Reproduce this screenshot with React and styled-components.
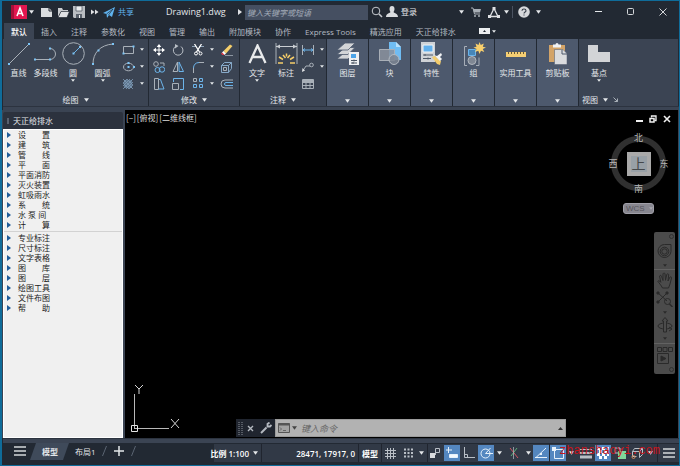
import styled, { createGlobalStyle } from "styled-components";

const GlobalStyle = createGlobalStyle`
  * {
    box-sizing: border-box;
  }

  body {
    margin: 0;
    background-color: #222933;
    font-family: "Open Sans", "Noto Sans CJK SC", sans-serif;
    font-size: 8px;
    color: #e4e7ea;
  }

  button,
  input {
    font-family: inherit;
    font-size: inherit;
    color: inherit;
  }

  button {
    margin: 0;
    padding: 0;
    border: none;
    background: none;
  }
`;

const Window = styled.div`
  display: flex;
  flex-direction: column;
  min-height: 100vh;
  background-color: #222933;
  border: 1px solid #0f6c9a;
  border-left-width: 2px;
`;

const Svg = styled.svg`
  display: block;
  flex: none;
  fill: none;
  stroke: #a9b0b8;
  stroke-width: 1;
`;

/* ---------- title bar ---------- */

const TitleBar = styled.header`
  display: flex;
  align-items: center;
  height: 22px;
  padding-left: 8px;
`;

const FileTools = styled.div`
  display: flex;
  align-items: center;
  margin-left: 4px;
`;

const IconButton = styled.button`
  display: flex;
  align-items: center;
  justify-content: ${(props) => (props.$end ? "flex-end" : "center")};
  flex: none;
  width: ${(props) => props.$w || 16}px;
  height: ${(props) => props.$h || 16}px;
`;

const TextButton = styled.button`
  display: flex;
  align-items: center;
  flex: none;
  gap: 3px;
  line-height: 12px;
  white-space: nowrap;
  color: ${(props) => props.$color || "#e4e7ea"};
`;

const FileName = styled.h1`
  margin: 0 0 0 32px;
  width: 69px;
  flex: none;
  font-size: 9px;
  font-weight: 400;
  line-height: 14px;
`;

const SearchBox = styled.input`
  flex: none;
  width: 123px;
  height: 15px;
  padding: 0 2px;
  border: none;
  border-radius: 0;
  background-color: #454f61;
  outline: none;

  &::placeholder {
    color: #a3abb7;
    font-style: italic;
    opacity: 1;
  }
`;

const Spacer = styled.div`
  flex: 1;
`;

const Divider = styled.span`
  flex: none;
  width: 1px;
  height: ${(props) => props.$h || 12}px;
  background-color: ${(props) => props.$color || "#4a5260"};
`;

/* ---------- ribbon ---------- */

const TabBar = styled.nav`
  display: flex;
  align-items: stretch;
  height: 16px;
  padding-left: 2px;
`;

const RibbonTab = styled.button`
  padding: 0 7px;
  line-height: 15px;
  white-space: nowrap;
  font-weight: ${(props) => (props.$active ? 500 : 400)};
  color: ${(props) => (props.$active ? "#ffffff" : "#b4bac2")};
  background-color: ${(props) => (props.$active ? "#3b4453" : "transparent")};
`;

const Ribbon = styled.section`
  display: flex;
  gap: 1px;
  height: 67px;
  padding: 0 1px;
`;

const Panel = styled.div`
  display: flex;
  flex-direction: column;
  flex: ${(props) => (props.$w ? "none" : "1")};
  width: ${(props) => (props.$w ? `${props.$w}px` : "auto")};
  background-color: #3b4453;
`;

const PanelBody = styled.div`
  display: flex;
  flex: 1;
  padding: 2px 0 0 ${(props) => props.$pad || 0}px;
`;

const PanelFooter = styled.button`
  display: flex;
  align-items: center;
  justify-content: ${(props) => (props.$start ? "flex-start" : "center")};
  gap: 5px;
  height: 13px;
  padding: 0 3px;
  line-height: 12px;
`;

const BigTool = styled.button`
  display: flex;
  flex-direction: column;
  align-items: center;
  width: ${(props) => props.$w}px;
  height: 46px;
  line-height: 12px;
  white-space: nowrap;
`;

const BigIcon = styled.span`
  display: flex;
  align-items: center;
  height: 25px;
  margin-bottom: 1px;
`;

const ToolGrid = styled.div`
  display: grid;
  grid-template-columns: ${(props) => props.$cols};
  grid-auto-rows: 17px;
`;

const ToolCell = styled.div`
  display: flex;
  align-items: center;
`;

const CollapsedPanel = styled.button`
  display: flex;
  flex-direction: column;
  align-items: center;
  flex: none;
  width: 41px;
  padding: 2px 0 3px;
  line-height: 12px;
  white-space: nowrap;
  background-color: #4d596d;
`;

const Strip = styled.div`
  flex: none;
  height: ${(props) => props.$h}px;
  margin-left: 1px;
  background-color: #3b4453;
  border-top: 1px solid #2c333f;
`;

/* ---------- work area ---------- */

const Workspace = styled.main`
  display: flex;
  flex: 1;
  padding: 0 1px;
  background-color: #3b4453;
`;

const Palette = styled.aside`
  display: flex;
  flex-direction: column;
  flex: none;
  width: 120px;
  margin: 2px 2px 0 0;
`;

const PaletteTitle = styled.h2`
  display: flex;
  align-items: center;
  gap: 4px;
  height: 17px;
  margin: 0;
  padding-left: 4px;
  border-radius: 2px 2px 0 0;
  font-size: 8px;
  font-weight: 400;
  background-color: #2c323e;
`;

const Grip = styled.span`
  width: 2px;
  height: 6px;
  background-color: #596170;
`;

const PaletteBody = styled.div`
  flex: 1;
  background-color: #f0f0f0;
  border: 1px solid #ffffff;
`;

const PaletteGroup = styled.ul`
  list-style: none;
  margin: 0;
  padding: 0;

  & + & {
    margin-top: 1px;
    padding-top: 1px;
    border-top: 1px solid #d2d2d2;
  }
`;

const PaletteItem = styled.button`
  display: flex;
  align-items: center;
  gap: 7px;
  width: 100%;
  height: 10px;
  padding-left: 3px;
  line-height: 10px;
  white-space: pre;
  color: #1b1b1b;
`;

const Canvas = styled.section`
  position: relative;
  flex: 1;
  min-height: 328px;
  background-color: #000000;
`;

const ViewLabels = styled.div`
  display: flex;
  gap: 1px;
  padding: 2px 1px;
  font-family: "Noto Sans CJK SC", sans-serif;
  line-height: 13px;
  color: #dcdcdc;
`;

const DocControls = styled.div`
  position: absolute;
  top: 2px;
  right: 4px;
  display: flex;
`;

const ViewCube = styled.div`
  position: absolute;
  top: 21px;
  right: 7px;
  display: flex;
  flex-direction: column;
  align-items: center;
`;

const CubeGrid = styled.div`
  display: grid;
  grid-template-columns: 14px 37px 14px;
  grid-template-rows: 14px 37px 14px;
  place-items: center;
  background: radial-gradient(
    circle at center,
    transparent 21px,
    #303030 22px,
    #303030 27px,
    transparent 28px
  );
`;

const Compass = styled.button`
  grid-area: ${(props) => props.$area};
  line-height: 12px;
  font-size: 9px;
  color: #b5b5b5;
`;

const CubeFace = styled.button`
  grid-area: 2 / 2;
  width: 24px;
  height: 24px;
  border: 4px solid #a9a9a9;
  font-size: 14px;
  line-height: 15px;
  color: #45484b;
  background-color: #98a0a6;
`;

const WcsButton = styled.button`
  display: flex;
  align-items: center;
  gap: 4px;
  width: 31px;
  height: 11px;
  margin-top: 7px;
  padding-left: 2px;
  border: 1px solid #a09fa8;
  border-radius: 3px;
  font-family: "Liberation Sans", sans-serif;
  color: #55545c;
  background-color: #87868f;
`;

const NavBar = styled.div`
  position: absolute;
  top: 122px;
  right: 3px;
  display: flex;
  flex-direction: column;
  align-items: center;
  width: 21px;
  padding: 1px 0;
  border-radius: 2px;
  background-color: #4b4b4b;

  svg {
    stroke: #2a2a2a;
  }
`;

const NavEnd = styled.span`
  align-self: flex-end;
  width: 5px;
  height: 5px;
  margin: 1px 1px;
  border: 1px solid #303030;
  border-radius: 50%;
`;

const NavRule = styled.span`
  width: 100%;
  height: 1px;
  background-color: #626262;
`;

const Ucs = styled.div`
  position: absolute;
  left: 5px;
  bottom: 3px;
`;

const CommandLine = styled.form`
  position: absolute;
  left: 111px;
  right: 112px;
  bottom: 1px;
  display: flex;
  align-items: center;
  height: 18px;
  padding-left: 2px;
  background-color: #20252f;
`;

const CommandField = styled.div`
  display: flex;
  align-items: center;
  flex: 1;
  height: 18px;
  padding: 0 2px;
  border: 1px solid #9b9b9b;
  background-color: #b2b2b2;
`;

const CommandInput = styled.input`
  flex: 1;
  min-width: 0;
  height: 14px;
  padding: 0 3px;
  border: none;
  outline: none;
  font-size: 9px;
  background: transparent;
  color: #222222;

  &::placeholder {
    color: #666666;
    font-style: italic;
    opacity: 1;
  }
`;

/* ---------- status bar ---------- */

const StatusBar = styled.footer`
  position: relative;
  display: flex;
  align-items: flex-start;
  flex: none;
  height: 22px;
  padding-left: 8px;
`;

const LayoutTab = styled.button`
  height: 17px;
  padding: ${(props) => (props.$active ? "0 11px 0 12px" : "0 6px")};
  line-height: 16px;
  white-space: nowrap;
  font-weight: ${(props) => (props.$active ? 700 : 400)};
  background-color: ${(props) => (props.$active ? "#3f4a5a" : "transparent")};
  clip-path: ${(props) =>
    props.$active
      ? "polygon(6px 0, 100% 0, calc(100% - 6px) 100%, 0 100%)"
      : "none"};
`;

const StatusTools = styled.div`
  display: flex;
  align-items: stretch;
  height: 18px;
  margin-top: 1px;
  background-color: #313946;
`;

const StatusText = styled.button`
  display: flex;
  align-items: center;
  justify-content: flex-end;
  gap: 4px;
  width: ${(props) => props.$w}px;
  padding-right: 3px;
  border-right: 1px solid #20252f;
  white-space: nowrap;
  font-weight: ${(props) => props.$weight || 600};
  color: #ffffff;
`;

const StatusButton = styled.button`
  display: flex;
  align-items: center;
  justify-content: center;
  width: ${(props) => props.$w || 17}px;
  margin: 1px 0;
  background-color: ${(props) => (props.$active ? "#5487c0" : "transparent")};

  svg {
    stroke: ${(props) => (props.$active ? "#e6f1fb" : "#b9bfc6")};
  }
`;

const Watermark = styled.span`
  position: absolute;
  right: 19px;
  top: 1px;
  font-family: "Liberation Mono", monospace;
  font-size: 12px;
  line-height: 14px;
  color: #c8141c;
  pointer-events: none;
`;

/* ---------- drawings ---------- */

const Icon = ({ w, h = w, children, ...rest }) => (
  <Svg width={w} height={h} viewBox={`0 0 ${w} ${h}`} aria-hidden="true" {...rest}>
    {children}
  </Svg>
);

const Caret = ({ color = "#e4e7ea", size = 4 }) => (
  <Svg width={size} height={size === 4 ? 3 : 4} viewBox="0 0 6 4" aria-hidden="true">
    <path d="M0 0h6L3 4z" fill={color} stroke="none" />
  </Svg>
);

const BLUE = "#6cb4ea";

const Dot = ({ x, y }) => (
  <rect x={x - 1} y={y - 1} width="2" height="2" fill="#7cc4f5" stroke="none" />
);

const icons = {
  logo: (
    <Icon w={16} h={14}>
      <path d="M0 0h16v14H0z" fill="#e3164f" stroke="none" />
      <path d="M0 0h3v14H0z" fill="#a80f38" stroke="none" />
      <path d="M6 11l3-8 3 8M7 8.5h4" stroke="#fff" strokeWidth="1.6" />
    </Icon>
  ),
  newFile: (
    <Icon w={12} h={10}>
      <path d="M0 1h8l3 3v6H0z" fill="#d9dcdf" stroke="none" />
      <path d="M8 0v4h4" stroke="#222933" />
    </Icon>
  ),
  open: (
    <Icon w={13} h={11}>
      <path d="M1 10V1h4l1 2h5v2H4z" fill="#c9ccd0" stroke="none" />
      <path d="M1 10.500L4 4.500h8.500l-2.500 6z" fill="#dfe1e4" stroke="#222933" strokeWidth=".7" />
    </Icon>
  ),
  save: (
    <Icon w={12}>
      <path d="M0 0h12v12H1L0 11z" fill="#b9bdc2" stroke="none" />
      <path d="M3 0h6v5H3z" fill="#eceef0" stroke="#555d68" strokeWidth=".8" />
      <path d="M3 8h6v4H3z" fill="#59616c" stroke="none" />
      <path d="M6.500 9v3" stroke="#eceef0" />
    </Icon>
  ),
  more: (
    <Icon w={8} h={6}>
      <path d="M0 .500L3.500 3 0 5.500zM4 .500L7.500 3 4 5.500z" fill="#dfe1e4" stroke="none" />
    </Icon>
  ),
  plane: (
    <Icon w={12} h={11}>
      <path d="M0 6L12 0 9 10 6 8 4 11 3.500 7z" fill="#5fb2ee" stroke="none" />
      <path d="M3.500 7L10 2 5.500 8" stroke="#222933" strokeWidth=".7" />
    </Icon>
  ),
  play: (
    <Icon w={4} h={6}>
      <path d="M0 0l4 3-4 3z" fill="#dfe1e4" stroke="none" />
    </Icon>
  ),
  search: (
    <Icon w={12}>
      <circle cx="5" cy="5" r="3.800" stroke="#c5c9ce" />
      <path d="M8 8l3 3" stroke="#c5c9ce" strokeWidth="1.600" />
    </Icon>
  ),
  user: (
    <Icon w={12}>
      <path d="M3.500 3a2.500 3 0 015 0c0 1.500-.6 2.300-1 3 0 1 4.500 1.200 4.500 5H0c0-3.800 4.500-4 4.500-5-.4-.7-1-1.500-1-3z" fill="#d9dcdf" stroke="none" />
    </Icon>
  ),
  cart: (
    <Icon w={10}>
      <path d="M0 1h2l1.500 6H9" stroke="#a9afb6" />
      <path d="M2 2h8L9 5.500H3z" fill="#a9afb6" stroke="none" />
      <circle cx="4" cy="9" r="1" fill="#a9afb6" stroke="none" />
      <circle cx="8" cy="9" r="1" fill="#a9afb6" stroke="none" />
    </Icon>
  ),
  autodesk: (
    <Icon w={12} h={11}>
      <path d="M6 1.500L10 9.500H2z" stroke="#dfe1e4" strokeWidth="1.300" />
      <path d="M4.500 0h3v3h-3zM0 8h3v3H0zM9 8h3v3H9z" fill="#dfe1e4" stroke="none" />
    </Icon>
  ),
  help: (
    <Icon w={12}>
      <circle cx="6" cy="6" r="5.800" fill="#d6d8db" stroke="none" />
      <path d="M4 4.700C4 2.500 8 2.500 8 4.700 8 6 6 6 6 7.600M6 8.600v1" stroke="#333b47" strokeWidth="1.100" />
    </Icon>
  ),
  minimize: (
    <Icon w={8}>
      <path d="M0 3.500h7" stroke="#e4e7ea" />
    </Icon>
  ),
  maximize: (
    <Icon w={8}>
      <rect x=".500" y=".500" width="6" height="6" rx="1" stroke="#d4d7da" />
    </Icon>
  ),
  close: (
    <Icon w={8}>
      <path d="M.500 .500l7 7M7.500 .500l-7 7" stroke="#d4d7da" />
    </Icon>
  ),
  line: (
    <Icon w={22}>
      <path d="M1 21L21 1" />
      <Dot x={1} y={21} />
      <Dot x={21} y={1} />
    </Icon>
  ),
  polyline: (
    <Icon w={24} h={16}>
      <path d="M1 13.500h15a5.500 5.500 0 000-11" />
      <Dot x={1} y={13.5} />
      <Dot x={16} y={13.5} />
      <Dot x={16} y={2.5} />
    </Icon>
  ),
  circle: (
    <Icon w={23}>
      <circle cx="11.500" cy="11.500" r="10.800" />
      <path d="M11.500 11.500l6-6" stroke={BLUE} />
      <Dot x={11.5} y={11.5} />
      <Dot x={18} y={5} />
    </Icon>
  ),
  arc: (
    <Icon w={22}>
      <path d="M1 21C1 10 8 2 21 1" />
      <Dot x={1} y={21} />
      <Dot x={6.5} y={7.5} />
      <Dot x={21} y={1} />
    </Icon>
  ),
  rect: (
    <Icon w={13} h={10}>
      <path d="M1.500 1.500h10v7h-10z" />
      <Dot x={11.5} y={1.5} />
      <Dot x={1.5} y={8.5} />
    </Icon>
  ),
  ellipse: (
    <Icon w={13} h={10}>
      <ellipse cx="6.500" cy="5" rx="5" ry="3.800" />
      <Dot x={6.5} y={5} />
      <Dot x={12} y={5} />
      <Dot x={6.5} y={1} />
    </Icon>
  ),
  hatch: (
    <Icon w={12}>
      <path d="M2 2h8v8H2z" fill="#5f7790" stroke="none" />
      <path d="M1 5l4-4M1 8l7-7M1 11L11 1M4 11l7-7M7 11l4-4M1 1l10 10M5 1l6 6M1 5l6 6" stroke="#7f9ab5" strokeWidth=".800" />
    </Icon>
  ),
  move: (
    <Icon w={12}>
      <path d="M6 1v10M1 6h10" stroke="#fff" />
      <path d="M6 0l2.300 3H3.700zM6 12l2.300-3H3.700zM0 6l3-2.300v4.600zM12 6L9 3.700v4.600z" fill="#fff" stroke="none" />
    </Icon>
  ),
  rotate: (
    <Icon w={12}>
      <path d="M9 2.500a4.800 4.800 0 11-5-.4" stroke="#b9bfc6" />
      <path d="M3 0l3.500 2L3 4.500z" fill="#b9bfc6" stroke="none" />
    </Icon>
  ),
  trim: (
    <Icon w={12}>
      <path d="M0 2.500h4M7 2.500h5" stroke="#8fa3b8" />
      <path d="M2.500 0l5 8M9.500 0l-5 8" stroke="#fff" strokeWidth="1.300" />
      <circle cx="4" cy="9.500" r="1.500" stroke="#fff" />
      <circle cx="8.500" cy="9.500" r="1.500" stroke="#fff" />
    </Icon>
  ),
  erase: (
    <Icon w={13} h={12}>
      <path d="M3.500 7L10 .500 12.500 2 6 9.500z" fill="#f5cf6b" stroke="none" />
      <path d="M3.500 7L6 9.500 4.500 11 2 8.500z" fill="#fff" stroke="none" />
      <path d="M2 8.500L4.500 11H2.500L1 9.700z" fill="#e8394a" stroke="none" />
      <path d="M5 11.500h8" stroke="#8c95a1" />
    </Icon>
  ),
  copy: (
    <Icon w={12}>
      <circle cx="3" cy="3" r="2.300" />
      <path d="M7 2h4v3" />
      <circle cx="4.500" cy="9" r="2.500" stroke={BLUE} />
      <circle cx="9" cy="8.500" r="2.700" stroke={BLUE} />
    </Icon>
  ),
  mirror: (
    <Icon w={12}>
      <path d="M5.500 1v9.500H1z" />
      <path d="M7 1v9.500h4.500z" stroke={BLUE} />
    </Icon>
  ),
  fillet: (
    <Icon w={12}>
      <path d="M1.500 12V7" />
      <path d="M1.500 7c0-3 2-5.500 5.500-5.500" stroke={BLUE} />
      <path d="M7 1.500h5" />
    </Icon>
  ),
  box: (
    <Icon w={12}>
      <path d="M1.500 4.500h7v7h-7zM1.500 4.500l3-3h7l-3 3M11.500 1.500v6l-3 4" stroke="#86a9c8" />
      <path d="M3.500 6.500h3v3h-3z" />
    </Icon>
  ),
  stretch: (
    <Icon w={12}>
      <path d="M1.500 .500h4v11h-4z" />
      <path d="M5.500 1.500h2l3.500 9.500H5.500" stroke={BLUE} />
    </Icon>
  ),
  scale: (
    <Icon w={12}>
      <path d="M1.500 4V.500h10v11H8" stroke={BLUE} />
      <path d="M.500 5.500h6v6h-6z" />
    </Icon>
  ),
  array: (
    <Icon w={12} h={11}>
      <path d="M1.500 .500h3v3h-3z" stroke="#a9b0b8" />
      <path d="M7.500 .500h3v3h-3zM1.500 6.500h3v3h-3zM7.500 6.500h3v3h-3z" stroke={BLUE} />
    </Icon>
  ),
  offset: (
    <Icon w={13} h={10}>
      <path d="M13 1H5a4 4 0 000 8h8" />
      <path d="M13 3.500H6a1.500 1.500 0 000 3h7" stroke={BLUE} />
    </Icon>
  ),
  text: (
    <Icon w={19} h={20}>
      <path d="M1.500 19L9.500 1.500 17.500 19M4.500 13h10" stroke="#e8eaec" strokeWidth="2.300" />
    </Icon>
  ),
  dimension: (
    <Icon w={23}>
      <path d="M1 1v21M22 1v21" />
      <path d="M1 4.500h21" stroke="#c9cdd2" />
      <path d="M1 4.500l4-2v4zM22 4.500l-4-2v4z" fill="#c9cdd2" stroke="none" />
      <path d="M8 13l2.500 3M15 13l-2.500 3M11.500 11.500v3M4 15l4 2.500M19 15l-4 2.500M3 21h5M15 21h5" stroke="#f6cd69" strokeWidth="1.500" />
    </Icon>
  ),
  linearDim: (
    <Icon w={12} h={10}>
      <path d="M.500 0v10M11.500 0v10" />
      <path d="M1 5h10M3 3.500L1 5l2 1.500M9 3.500L11 5 9 6.500" stroke={BLUE} />
    </Icon>
  ),
  leader: (
    <Icon w={12} h={10}>
      <path d="M1 8.500L4 4h4" />
      <circle cx="9.500" cy="3" r="1.800" />
      <path d="M0 10l.500-4L3 8.500z" fill="#dfe1e4" stroke="none" />
    </Icon>
  ),
  table: (
    <Icon w={12} h={10}>
      <path d="M.500 .500h11v9H.500zM.500 3.500h11M.500 6.500h11M4 3.500v6M8 3.500v6" />
      <path d="M1 1h10v2H1z" fill="#a9b0b8" stroke="none" />
    </Icon>
  ),
  layers: (
    <Icon w={24}>
      <g fill="#d2d4d7" stroke="#4d596d" strokeWidth=".800">
        <path d="M1 17l8-7h10l-7 7z" />
        <path d="M1 12.500l8-7h10l-7 7z" />
        <path d="M1 8l8-7h10l-7 7z" />
      </g>
      <path d="M13 10h10v13H13z" fill="#eef0f2" stroke="none" />
      <path d="M15 12h5v4h-5z" fill="#4ba3e8" stroke="none" />
      <path d="M15 18.500h6M15 21h6M18 17.500v2M17 20v2" stroke="#4b5563" />
    </Icon>
  ),
  block: (
    <Icon w={24}>
      <path d="M11 0h7l5 5v13H11z" fill="#6fbcf3" stroke="none" />
      <path d="M18 0l5 5h-5z" fill="#b9e0fb" stroke="none" />
      <path d="M1.500 7.500h15v11h-15z" fill="#8b929d" fillOpacity=".85" stroke="#a9afb7" />
      <circle cx="16" cy="17.500" r="5" fill="#7c8592" fillOpacity=".85" stroke="#b4bac1" />
    </Icon>
  ),
  properties: (
    <Icon w={24}>
      <path d="M1 0h14v20H1z" fill="#cfd2d6" stroke="none" />
      <path d="M3 3h10v7H3z" fill="#62b0ec" stroke="#f1f3f5" />
      <path d="M3 13h10M3 16.500h8M5 12v2M8 15.500v2" stroke="#515b69" />
      <path d="M12 15l3-1 6 5-1 4-3-1z" fill="#f2cc6c" stroke="none" />
      <path d="M14 13l3 1 4-3 1 2-2 2 2 2-2 2z" fill="#f1f3f5" stroke="none" />
    </Icon>
  ),
  group: (
    <Icon w={24}>
      <path d="M5 4.500H2.500v19H5M14 23.500h3v-8" stroke="#a7aeb8" />
      <path d="M6.500 7.500h7v6h-7z" fill="#4786b8" stroke={BLUE} />
      <circle cx="10" cy="18.500" r="4" fill="#7f8793" stroke="#b1b7be" />
      <path d="M17.500 0l1.300 3 3-1.500-1 3.200 3.200.8-3.200 1.500 1.500 3-3.300-1.200-1.500 3.200-1.200-3.200-3.300 1.200 1.500-3L11.500 5.500l3-.8-1-3.200 3 1.500z" fill="#f8cf6d" stroke="none" />
    </Icon>
  ),
  ruler: (
    <Icon w={20} h={24}>
      <path d="M0 10h20v5H0z" fill="#f6cf73" stroke="none" />
      <path d="M2.500 10v2M5.500 10v2M8.500 10v2M11.500 10v2M14.500 10v2M17.500 10v2" stroke="#6a5a36" />
    </Icon>
  ),
  clipboard: (
    <Icon w={22} h={24}>
      <path d="M2 3h16v17H2z" fill="#d3a468" stroke="none" />
      <path d="M6 2.500h2.500a1.500 1.500 0 013 0H14v3H6z" fill="#f1f3f5" stroke="none" />
      <path d="M7.500 7.500h8.500l4 4v11H7.500z" fill="#dadcdf" stroke="#4d596d" strokeWidth=".500" />
      <path d="M15 8v4h5" stroke="#4d596d" />
    </Icon>
  ),
  base: (
    <Icon w={22} h={17}>
      <path d="M0 0h10v7h12v10H0z" fill="#d2d4d7" stroke="none" />
    </Icon>
  ),
  launcher: (
    <Icon w={5}>
      <path d="M.500 .500l4 4M4.500 1.500v3h-3" />
    </Icon>
  ),
  ribbonState: (
    <Icon w={11} h={6}>
      <path d="M0 0h11v6H0z" fill="#eceef0" stroke="none" />
      <path d="M4 4l1.500-2L7 4z" fill="#222933" stroke="none" />
    </Icon>
  ),
  docMin: (
    <Icon w={8}>
      <path d="M1 6h7" stroke="#f0f0f0" strokeWidth="2" />
    </Icon>
  ),
  docRestore: (
    <Icon w={8}>
      <path d="M2.500 2.500V1H7v4.500H5.500" stroke="#f0f0f0" strokeWidth="1.300" />
      <path d="M1 3.500h4V7H1z" stroke="#f0f0f0" strokeWidth="1.500" />
    </Icon>
  ),
  docClose: (
    <Icon w={8}>
      <path d="M1 1l6 6M7 1L1 7" stroke="#f0f0f0" strokeWidth="1.600" />
    </Icon>
  ),
  wheel: (
    <Icon w={15}>
      <path d="M7.500 .500h6.500v7a6.500 6.500 0 11-6.500-7z" />
      <circle cx="7.500" cy="7.500" r="4.300" />
      <circle cx="7.500" cy="7.500" r="2.700" />
    </Icon>
  ),
  hand: (
    <Icon w={16} h={17}>
      <path d="M5.500 16C4 13 2 11 .800 9.300c.6-1 1.800-.6 3 1L2.500 4c.6-1 1.700-.7 2 .2L6 8.500V1.800c.5-1 1.700-1 2 0l.500 6.500 1.300-6c.7-.8 1.800-.5 1.900.5L11 9l2-4c.8-.6 1.700 0 1.500 1L13 12l-1.500 4z" />
    </Icon>
  ),
  zoomNav: (
    <Icon w={17} h={16}>
      <path d="M2 2l9 8M11 2l-9 9" />
      <path d="M1 1h2v2H1zM10 1h2v2h-2zM1 10h2v2H1z" fill="#2a2a2a" />
      <circle cx="11.500" cy="10.500" r="3" />
      <path d="M13.500 13l3 3" strokeWidth="1.500" />
    </Icon>
  ),
  orbit: (
    <Icon w={16}>
      <ellipse cx="8" cy="9" rx="7" ry="3" />
      <path d="M6.500 15V4H5l3-3.500L11 4H9.500v11z" fill="#4b4b4b" />
      <path d="M12 14l3-2-3-2" />
    </Icon>
  ),
  motion: (
    <Icon w={16} h={17}>
      <path d="M.500 .500h4v4h-4zM6 .500h4v4H6zM11.500 .500h4v4h-4zM.500 6.500h11v10H.500z" />
      <path d="M4 9l5 2.500L4 14z" fill="#2a2a2a" />
    </Icon>
  ),
  ucs: (
    <Icon w={50} h={50}>
      <path d="M4.500 9v35M4.500 43.500H39" stroke="#b9b9b9" />
      <path d="M1.500 40.500h6v6h-6z" stroke="#e4e4e4" />
      <path d="M5 0l4 4 4-4M9 4v5M41 34l8 9M49 34l-8 9" stroke="#d4d4d4" />
    </Icon>
  ),
  grip: (
    <Icon w={5} h={13}>
      <path d="M1 0v13M4 0v13" stroke="#8d939c" strokeDasharray="1 1" />
    </Icon>
  ),
  wrench: (
    <Icon w={12}>
      <path d="M1 11l5.500-5.500" stroke="#b4b9c0" strokeWidth="2" />
      <path d="M9.500 .500L7.500 2v2.500H10L11.500 3" stroke="#b4b9c0" strokeWidth="1.800" />
    </Icon>
  ),
  prompt: (
    <Icon w={12} h={10}>
      <path d="M.500 .500h11v9H.500z" fill="#a2a2a2" stroke="#555" />
      <path d="M.500 1.500h11" stroke="#555" strokeWidth="2" />
      <path d="M2 4.500L3.500 6 2 7.500M5 7.500h3" stroke="#555" strokeWidth=".800" />
    </Icon>
  ),
  menu: (
    <Icon w={12} h={10}>
      <path d="M0 1h12M0 5h12M0 9h12" stroke="#d4d7da" strokeWidth="1.500" />
    </Icon>
  ),
  plus: (
    <Icon w={10}>
      <path d="M5 0v10M0 5h10" stroke="#e4e7ea" strokeWidth="1.500" />
    </Icon>
  ),
  slash: (
    <Icon w={5} h={16}>
      <path d="M4.500 3L.500 13" stroke="#5b6472" />
    </Icon>
  ),
  grid: (
    <Icon w={11}>
      <path d="M2.500 0v11M5.500 0v11M8.500 0v11M0 2.500h11M0 5.500h11M0 8.500h11" />
    </Icon>
  ),
  snap: (
    <Icon w={10}>
      <path d="M1 1.500h9M1 5h9M1 8.500h9" strokeWidth="2" strokeDasharray="2 1.500" />
    </Icon>
  ),
  infer: (
    <Icon w={12}>
      <path d="M0 6h5v5H0z" fill="#d9dcdf" stroke="none" />
      <path d="M5.500 8V1.500h4v4h-4" />
    </Icon>
  ),
  dynamic: (
    <Icon w={12}>
      <path d="M2.500 0v6M0 3h6" />
      <path d="M3.500 7.500h8v3h-8z" fill="#f3f8fd" />
    </Icon>
  ),
  ortho: (
    <Icon w={12}>
      <path d="M1.500 0v10.500H12M1.500 7.500h3v3" />
    </Icon>
  ),
  polar: (
    <Icon w={13} h={12}>
      <circle cx="5.500" cy="6.500" r="4.500" />
      <path d="M5.500 6.500H13M5.500 6.500L10.500 1" />
    </Icon>
  ),
  iso: (
    <Icon w={10} h={12}>
      <path d="M1 1l8 10" stroke="#cf5560" />
      <path d="M8 1L2 9" stroke="#5fae78" />
      <path d="M4.500 0v12" strokeWidth=".700" />
    </Icon>
  ),
  track: (
    <Icon w={12}>
      <path d="M0 10.500h12M1 10.500L11 1" />
      <path d="M5 6h2v2H5z" fill="#e6f1fb" stroke="none" />
    </Icon>
  ),
  osnap: (
    <Icon w={13}>
      <path d="M2.500 2.500h9v9h-9z" />
      <path d="M0 0h4v4H0z" fill="#e6f1fb" stroke="none" />
    </Icon>
  ),
  weight: (
    <Icon w={12} h={11}>
      <path d="M0 1.500h12" />
      <path d="M0 5h12" strokeWidth="2" />
      <path d="M0 9h12" strokeWidth="3" />
    </Icon>
  ),
  transparency: (
    <Icon w={12}>
      <path d="M0 1.500h12M0 7.500h12" stroke="#fff" strokeWidth="3" strokeDasharray="3 2" />
      <path d="M2 4.500h10M2 10.500h10" stroke="#fff" strokeWidth="3" strokeDasharray="3 2" />
    </Icon>
  ),
  cycling: (
    <Icon w={12}>
      <path d="M1 1h5v5H1z" />
      <path d="M4 4h8v8H4z" fill="#7fd79a" stroke="none" />
      <path d="M5 4l4-3" stroke="#cf5560" />
    </Icon>
  ),
  cube: (
    <Icon w={12}>
      <path d="M3.500 1.500h8v6l-3 3v-6h-7M3.500 1.500l-2 3v5h4M8.500 4.500l3-3" />
      <circle cx="2.500" cy="10" r="1.500" stroke="#d08a5e" />
    </Icon>
  ),
};

const ribbonTabs = [
  "默认", "插入", "注释", "参数化", "视图", "管理", "输出",
  "附加模块", "协作", "Express Tools", "精选应用", "天正给排水",
];

const collapsedPanels = [
  { label: "图层", icon: "layers" },
  { label: "块", icon: "block" },
  { label: "特性", icon: "properties" },
  { label: "组", icon: "group" },
  { label: "实用工具", icon: "ruler" },
  { label: "剪贴板", icon: "clipboard" },
];

const modifyTools = [
  ["移动", "move"], ["旋转", "rotate"], ["修剪", "trim", true], ["删除", "erase"],
  ["复制", "copy"], ["镜像", "mirror"], ["圆角", "fillet", true], ["分解", "box"],
  ["拉伸", "stretch"], ["缩放", "scale"], ["阵列", "array", true], ["偏移", "offset"],
];

const paletteGroups = [
  [
    "设　　置", "建　　筑", "管　　线", "平　　面", "平面消防",
    "灭火装置", "虹吸雨水", "系　　统", "水 泵 间", "计　　算",
  ],
  [
    "专业标注", "尺寸标注", "文字表格", "图　　库",
    "图　　层", "绘图工具", "文件布图", "帮　　助",
  ],
];

const Tool = ({ label, icon, w, drop }) => (
  <BigTool $w={w}>
    <BigIcon>{icons[icon]}</BigIcon>
    {label}
    {drop && <Caret />}
  </BigTool>
);

const SmallTool = ({ label, icon, drop, w = 20 }) => (
  <ToolCell>
    <IconButton aria-label={label} $w={w}>
      {icons[icon]}
    </IconButton>
    {drop && (
      <IconButton aria-label={`${label}选项`} $w={7}>
        <Caret />
      </IconButton>
    )}
  </ToolCell>
);

const Title = () => (
  <TitleBar>
    <IconButton aria-label="应用程序菜单" $w={17}>{icons.logo}</IconButton>
    <IconButton aria-label="菜单" $w={8}><Caret size={5} /></IconButton>
    <FileTools>
      <IconButton aria-label="新建">{icons.newFile}</IconButton>
      <IconButton aria-label="打开">{icons.open}</IconButton>
      <IconButton aria-label="保存">{icons.save}</IconButton>
      <IconButton aria-label="更多">{icons.more}</IconButton>
      <TextButton $color="#5fb2ee">
        {icons.plane}
        共享
      </TextButton>
    </FileTools>
    <FileName>Drawing1.dwg</FileName>
    <IconButton aria-label="展开搜索" $w={10}>{icons.play}</IconButton>
    <SearchBox aria-label="搜索" placeholder="键入关键字或短语" />
    <IconButton aria-label="搜索" $w={18}>{icons.search}</IconButton>
    <TextButton>
      {icons.user}
      登录
    </TextButton>
    <IconButton aria-label="登录选项" $w={47} $end>
      <Caret size={5} />
    </IconButton>
    <IconButton aria-label="应用商店" $w={23}>{icons.cart}</IconButton>
    <IconButton aria-label="Autodesk" $w={14}>{icons.autodesk}</IconButton>
    <IconButton aria-label="Autodesk 选项" $w={11}><Caret size={5} /></IconButton>
    <Divider />
    <IconButton aria-label="帮助" $w={22}>{icons.help}</IconButton>
    <IconButton aria-label="帮助选项" $w={6}><Caret size={5} /></IconButton>
    <Spacer />
    <IconButton aria-label="最小化" $w={32}>{icons.minimize}</IconButton>
    <IconButton aria-label="最大化" $w={32}>{icons.maximize}</IconButton>
    <IconButton aria-label="关闭" $w={32}>{icons.close}</IconButton>
  </TitleBar>
);

const RibbonArea = () => (
  <Ribbon>
    <Panel $w={145}>
      <PanelBody $pad={2}>
        <Tool label="直线" icon="line" w={27} />
        <Tool label="多段线" icon="polyline" w={27} />
        <Tool label="圆" icon="circle" w={28} drop />
        <Tool label="圆弧" icon="arc" w={31} drop />
        <ToolGrid $cols="28px">
          <SmallTool label="矩形" icon="rect" drop />
          <SmallTool label="椭圆" icon="ellipse" drop />
          <SmallTool label="图案填充" icon="hatch" drop />
        </ToolGrid>
      </PanelBody>
      <PanelFooter>绘图<Caret size={5} /></PanelFooter>
    </Panel>
    <Panel $w={90}>
      <PanelBody>
        <ToolGrid $cols="19px 20px 28px 20px">
          {modifyTools.map(([label, icon, drop]) => (
            <SmallTool key={icon} label={label} icon={icon} drop={drop} />
          ))}
        </ToolGrid>
      </PanelBody>
      <PanelFooter>修改<Caret size={5} /></PanelFooter>
    </Panel>
    <Panel $w={86}>
      <PanelBody>
        <Tool label="文字" icon="text" w={34} drop />
        <Tool label="标注" icon="dimension" w={24} />
        <ToolGrid $cols="28px">
          <SmallTool label="线性" icon="linearDim" drop />
          <SmallTool label="引线" icon="leader" drop />
          <SmallTool label="表格" icon="table" />
        </ToolGrid>
      </PanelBody>
      <PanelFooter>注释<Caret size={5} /></PanelFooter>
    </Panel>
    {collapsedPanels.map(({ label, icon }) => (
      <CollapsedPanel key={icon}>
        <BigIcon>{icons[icon]}</BigIcon>
        {label}
        <Spacer as="span" />
        <Caret size={5} />
      </CollapsedPanel>
    ))}
    <Panel>
      <PanelBody $pad={3}>
        <Tool label="基点" icon="base" w={34} drop />
      </PanelBody>
      <PanelFooter $start>
        视图
        <Caret size={5} />
        {icons.launcher}
      </PanelFooter>
    </Panel>
  </Ribbon>
);

const ToolPalette = () => (
  <Palette>
    <PaletteTitle>
      <Grip />
      天正给排水
    </PaletteTitle>
    <PaletteBody>
      {paletteGroups.map((items) => (
        <PaletteGroup key={items[0]}>
          {items.map((item) => (
            <li key={item}>
              <PaletteItem>
                <Icon w={4} h={6}>
                  <path d="M0 0l4 3-4 3z" fill="#1f5c99" stroke="none" />
                </Icon>
                {item}
              </PaletteItem>
            </li>
          ))}
        </PaletteGroup>
      ))}
    </PaletteBody>
  </Palette>
);

const DrawingArea = () => (
  <Canvas>
    <ViewLabels>
      <button>[−]</button>
      <button>[俯视]</button>
      <button>[二维线框]</button>
    </ViewLabels>
    <DocControls>
      <IconButton aria-label="最小化图形" $w={14} $h={14}>{icons.docMin}</IconButton>
      <IconButton aria-label="还原图形" $w={14} $h={14}>{icons.docRestore}</IconButton>
      <IconButton aria-label="关闭图形" $w={14} $h={14}>{icons.docClose}</IconButton>
    </DocControls>
    <ViewCube>
      <CubeGrid>
        <Compass $area="1 / 2">北</Compass>
        <Compass $area="2 / 1">西</Compass>
        <CubeFace>上</CubeFace>
        <Compass $area="2 / 3">东</Compass>
        <Compass $area="3 / 2">南</Compass>
      </CubeGrid>
      <WcsButton>
        WCS
        <Caret color="#a9a8b2" />
      </WcsButton>
    </ViewCube>
    <NavBar>
      <NavEnd />
      <IconButton aria-label="导航控制盘" $w={19} $h={22}>{icons.wheel}</IconButton>
      <IconButton aria-label="控制盘选项" $w={19} $h={7}><Caret color="#2a2a2a" /></IconButton>
      <NavRule />
      <IconButton aria-label="平移" $w={19} $h={20}>{icons.hand}</IconButton>
      <IconButton aria-label="缩放" $w={19} $h={18}>{icons.zoomNav}</IconButton>
      <IconButton aria-label="缩放选项" $w={19} $h={8}><Caret color="#2a2a2a" /></IconButton>
      <IconButton aria-label="动态观察" $w={19} $h={18}>{icons.orbit}</IconButton>
      <IconButton aria-label="动态观察选项" $w={19} $h={9}><Caret color="#2a2a2a" /></IconButton>
      <NavRule />
      <IconButton aria-label="ShowMotion" $w={19} $h={22}>{icons.motion}</IconButton>
      <NavEnd />
    </NavBar>
    <Ucs>{icons.ucs}</Ucs>
    <CommandLine onSubmit={(e) => e.preventDefault()}>
      {icons.grip}
      <IconButton type="button" aria-label="关闭命令行" $w={14}>
        <Icon w={7}>
          <path d="M1 1l5 5M6 1L1 6" stroke="#b4b9c0" strokeWidth="1.400" />
        </Icon>
      </IconButton>
      <IconButton type="button" aria-label="自定义" $w={18}>{icons.wrench}</IconButton>
      <CommandField>
        {icons.prompt}
        <IconButton type="button" aria-label="最近使用的命令" $w={8} $h={14}>
          <Caret size={5} color="#444" />
        </IconButton>
        <CommandInput aria-label="命令" placeholder="键入命令" />
        <IconButton type="button" aria-label="展开历史记录" $w={6} $h={14}>
          <Icon w={5} h={3}>
            <path d="M0 3h5L2.500 0z" fill="#333" stroke="none" />
          </Icon>
        </IconButton>
      </CommandField>
    </CommandLine>
  </Canvas>
);

const Status = () => (
  <StatusBar>
    <IconButton aria-label="布局菜单" $w={20}>{icons.menu}</IconButton>
    <LayoutTab $active>模型</LayoutTab>
    <LayoutTab>布局1</LayoutTab>
    {icons.slash}
    <IconButton aria-label="新建布局" $w={24}>{icons.plus}</IconButton>
    {icons.slash}
    <Spacer />
    <StatusTools>
      <StatusText $w={48}>比例 1:100<Caret size={5} /></StatusText>
      <StatusText $w={97}>28471, 17917, 0</StatusText>
      <StatusText $w={23} $weight={700}>模型</StatusText>
      <StatusButton aria-label="栅格">{icons.grid}</StatusButton>
      <StatusButton aria-label="捕捉">{icons.snap}</StatusButton>
      <StatusButton aria-label="捕捉选项" $w={11}><Caret size={5} /></StatusButton>
      <Divider $h={18} $color="#20252f" />
      <StatusButton aria-label="推断约束" $w={16}>{icons.infer}</StatusButton>
      <StatusButton aria-label="动态输入" $active $w={16}>{icons.dynamic}</StatusButton>
      <StatusButton aria-label="正交" $w={18}>{icons.ortho}</StatusButton>
      <StatusButton aria-label="极轴追踪" $active $w={16}>{icons.polar}</StatusButton>
      <StatusButton aria-label="极轴选项" $w={10}><Caret size={5} /></StatusButton>
      <StatusButton aria-label="等轴测草图" $w={19}>{icons.iso}</StatusButton>
      <StatusButton aria-label="等轴测选项" $w={10}><Caret size={5} /></StatusButton>
      <StatusButton aria-label="对象捕捉追踪" $active $w={16}>{icons.track}</StatusButton>
      <Divider $h={18} $color="#20252f" />
      <StatusButton aria-label="对象捕捉" $active $w={16}>{icons.osnap}</StatusButton>
      <StatusButton aria-label="对象捕捉选项" $w={10}><Caret size={5} /></StatusButton>
      <StatusButton aria-label="线宽" $w={19}>{icons.weight}</StatusButton>
      <StatusButton aria-label="透明度" $active $w={16}>{icons.transparency}</StatusButton>
      <StatusButton aria-label="选择循环" $w={18}>{icons.cycling}</StatusButton>
      <StatusButton aria-label="三维对象捕捉" $w={15}>{icons.cube}</StatusButton>
      <StatusButton aria-label="三维捕捉选项" $w={13}><Caret size={5} /></StatusButton>
      <Divider $h={18} $color="#20252f" />
      <StatusButton aria-label="自定义状态栏" $w={21}>{icons.menu}</StatusButton>
    </StatusTools>
    <Watermark>zhanshaoyi.com</Watermark>
  </StatusBar>
);

const App = () => {
  return (
    <>
      <GlobalStyle />
      <Window>
        <Title />
        <TabBar>
          {ribbonTabs.map((tab, i) => (
            <RibbonTab key={tab} $active={i === 0}>{tab}</RibbonTab>
          ))}
          <IconButton aria-label="功能区显示" $w={27} $end>
            {icons.ribbonState}
          </IconButton>
          <IconButton aria-label="功能区选项" $w={9}><Caret /></IconButton>
        </TabBar>
        <RibbonArea />
        <Strip $h={4} />
        <Workspace>
          <ToolPalette />
          <DrawingArea />
        </Workspace>
        <Strip $h={5} />
        <Status />
      </Window>
    </>
  );
};

export default App;
